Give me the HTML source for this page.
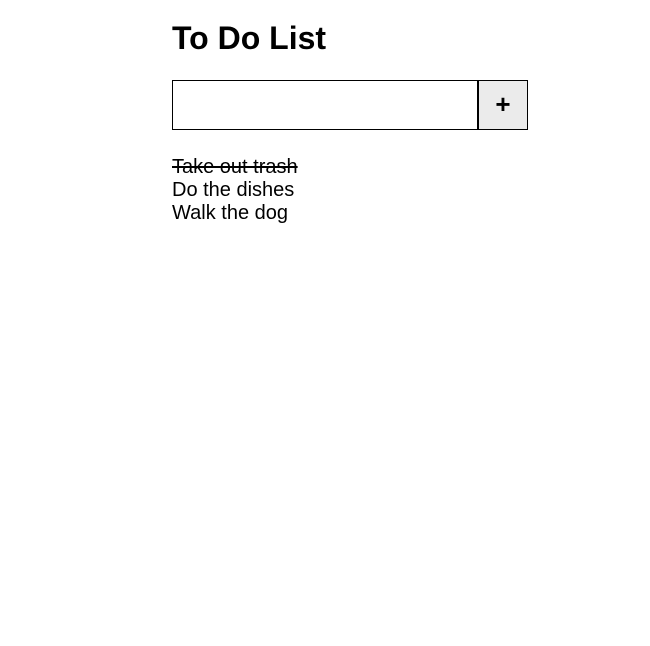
<!DOCTYPE html>
<html><head><meta charset="utf-8"><style>
html,body{margin:0;padding:0;background:#fff;width:650px;height:646px;overflow:hidden;font-family:"Liberation Sans",Arial,sans-serif;color:#000}
.wrap{position:absolute;left:172px;top:0;width:356px}
h1{margin:0;position:absolute;top:20px;left:0;font-size:32px;line-height:37px;font-weight:bold;white-space:nowrap}
.inp{position:absolute;top:80px;left:0;width:304px;height:48px;border:1px solid #000;background:#fff}
.btn{position:absolute;top:80px;left:306px;width:48px;height:48px;border:1px solid #000;background:#ebebeb;font-size:26px;line-height:46px;text-align:center;font-weight:bold}
.list{position:absolute;top:156px;left:0;font-size:20px;line-height:23px;white-space:nowrap}
.done{text-decoration:line-through}
</style></head><body>
<div class="wrap">
<h1>To Do List</h1>
<div class="inp"></div>
<div class="btn">+</div>
<div class="list"><div class="done">Take out trash</div><div>Do the dishes</div><div>Walk the dog</div></div>
</div>
</body></html>
